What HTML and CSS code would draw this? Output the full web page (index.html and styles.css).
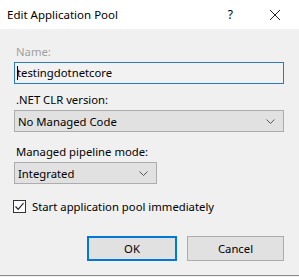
FILE: index.html
```html
<!DOCTYPE html>
<html>
<head>
<meta charset="utf-8">
<link rel="stylesheet" href="styles.css">
</head>
<body>
<div class="dialog">
  <div class="titlebar">
    <span class="title">Edit Application Pool</span>
    <span class="help">?</span>
    <span class="close">
      <svg width="12" height="12" viewBox="0 0 12 12"><path d="M1 1 L11 11 M11 1 L1 11" stroke="#222" stroke-width="1" fill="none"/></svg>
    </span>
  </div>
  <div class="content">
    <div class="label name-label">Name:</div>
    <div class="textbox"><span class="caret"></span>testingdotnetcore</div>
    <div class="label clr-label">.NET CLR version:</div>
    <div class="select wide"><span>No Managed Code</span>
      <svg class="chev" width="9" height="5" viewBox="0 0 9 5"><path d="M0.5 0.5 L4.5 4.5 L8.5 0.5" stroke="#555" stroke-width="1" fill="none"/></svg>
    </div>
    <div class="label pipe-label">Managed pipeline mode:</div>
    <div class="select narrow"><span>Integrated</span>
      <svg class="chev" width="9" height="5" viewBox="0 0 9 5"><path d="M0.5 0.5 L4.5 4.5 L8.5 0.5" stroke="#555" stroke-width="1" fill="none"/></svg>
    </div>
    <div class="check-row">
      <span class="checkbox">
        <svg width="11" height="11" viewBox="0 0 11 11"><path d="M1.5 5.5 L4.2 8.3 L9.5 2.2" stroke="#222" stroke-width="1.2" fill="none"/></svg>
      </span>
      <span class="check-label">Start application pool immediately</span>
    </div>
    <div class="buttons">
      <button class="btn ok">OK</button>
      <button class="btn cancel">Cancel</button>
    </div>
  </div>
</div>
</body>
</html>
```
FILE: styles.css
```css
html, body {
  margin: 0;
  padding: 0;
}
body {
  width: 299px;
  height: 277px;
  overflow: hidden;
  background: #f0f0f0;
  font-family: "Noto Sans", "Open Sans", sans-serif;
  font-size: 11.3px;
  color: #000;
}
.dialog {
  height: 276px;
  border-bottom: 1px solid #8a8a8a;
  box-sizing: border-box;
}
.titlebar {
  height: 29px;
  background: #fff;
  display: flex;
  align-items: center;
}
.title {
  margin-left: 7px;
  font-size: 11.5px;
  flex: 1;
}
.help {
  font-size: 12px;
  margin-right: 36px;
}
.close {
  display: flex;
  margin-right: 18px;
}
.content {
  padding: 0 15px 0 14px;
}
.label {
  height: 16px;
  line-height: 16px;
  margin-left: 2px;
}
.name-label {
  color: #a0a0a0;
  margin-top: 15px;
}
.clr-label {
  margin-top: 8px;
}
.pipe-label {
  margin-top: 12px;
}
.textbox {
  margin-top: 2px;
  height: 22px;
  box-sizing: border-box;
  border: 1px solid #2b7ac0;
  background: #f2f2f2;
  line-height: 20px;
  padding-left: 2px;
  position: relative;
}
.caret {
  position: absolute;
  left: 2px;
  top: 3px;
  width: 1px;
  height: 14px;
  background: #000;
}
.select {
  margin-top: 2px;
  height: 22px;
  box-sizing: border-box;
  border: 1px solid #adadad;
  background: #e1e1e1;
  display: flex;
  align-items: center;
  padding: 0 8px 0 3px;
}
.select span {
  flex: 1;
}
.select.narrow {
  width: 143px;
}
.check-row {
  margin-top: 15px;
  display: flex;
  align-items: center;
  margin-left: -1px;
}
.checkbox {
  width: 13px;
  height: 13px;
  box-sizing: border-box;
  border: 1px solid #333;
  background: #fff;
  display: flex;
  align-items: center;
  justify-content: center;
}
.check-label {
  margin-left: 6px;
}
.buttons {
  margin-top: 22px;
  display: flex;
  justify-content: flex-end;
  gap: 10px;
}
.btn {
  font-family: inherit;
  font-size: 11.3px;
  height: 25px;
  box-sizing: border-box;
  background: #e1e1e1;
  border: 1px solid #adadad;
  padding: 0;
  color: #000;
}
.btn.ok {
  width: 90px;
  border: 2px solid #0078d7;
}
.btn.cancel {
  width: 97px;
}
```
